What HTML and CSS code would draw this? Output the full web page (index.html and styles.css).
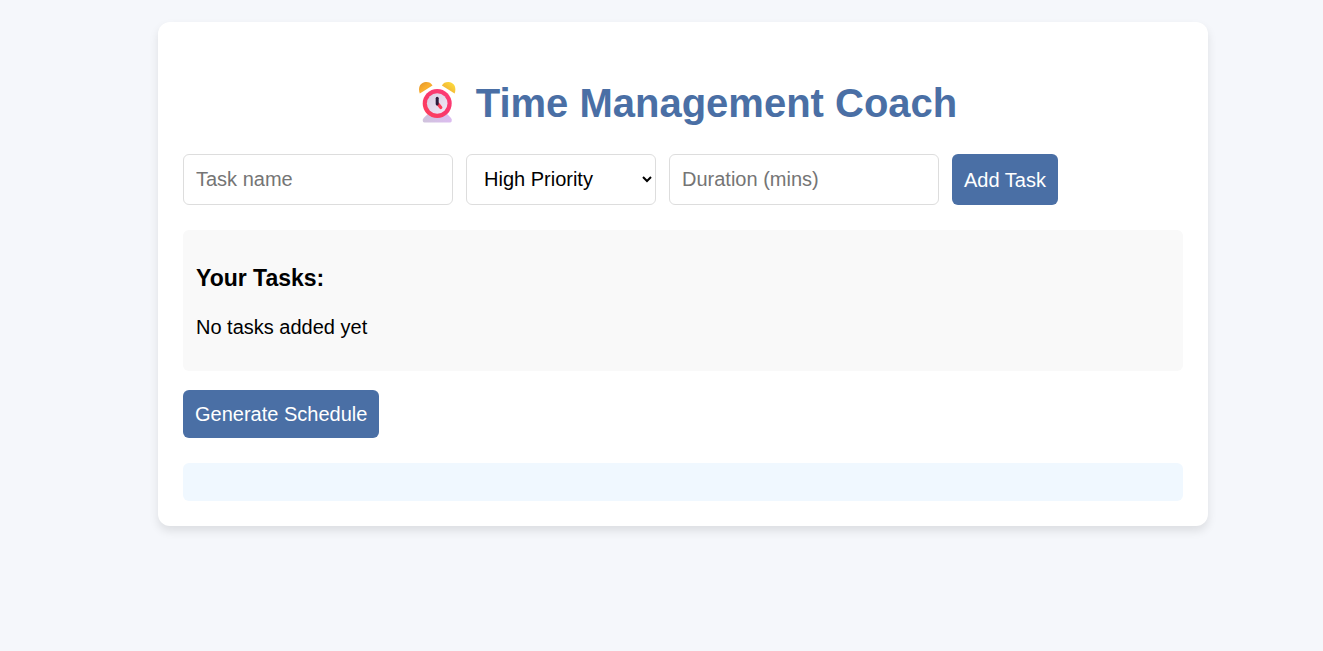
FILE: index.html
```html
<!DOCTYPE html>
<html lang="en">
<head>
<meta charset="utf-8">
<meta name="viewport" content="width=device-width, initial-scale=1">
<title>Time Management Coach</title>
<link rel="stylesheet" href="styles.css">
</head>
<body>
<main class="card">
  <h1 class="title">
    <svg class="clock" viewBox="0 0 55 44" aria-hidden="true">
      <defs>
        <linearGradient id="bell-left" x1="0" y1="0" x2="1" y2="1"><stop offset="0" stop-color="#e0942f"/><stop offset=".5" stop-color="#fbb02e"/><stop offset="1" stop-color="#dc9a3c"/></linearGradient>
        <linearGradient id="bell-right" x1="0" y1="1" x2="1" y2="0"><stop offset="0" stop-color="#ec9f33"/><stop offset="1" stop-color="#ffe43d"/></linearGradient>
        <linearGradient id="rim" x1="1" y1="0" x2="0" y2="1"><stop offset="0" stop-color="#ff3d78"/><stop offset=".5" stop-color="#f8386c"/><stop offset="1" stop-color="#ff4058"/></linearGradient>
        <linearGradient id="face" x1="0" y1="0" x2="1" y2="1"><stop offset="0" stop-color="#d9cbe0"/><stop offset="1" stop-color="#f2e8f6"/></linearGradient>
        <linearGradient id="foot" x1="0" y1="0" x2="1" y2="0"><stop offset="0" stop-color="#cfc3dc"/><stop offset="1" stop-color="#dcbcf0"/></linearGradient>
      </defs>
      <path d="M14 39.800q-1-2 .7-3.700l4.800-4.800h18l4.500 4.800q1.500 1.800.5 3.700-.4.600-1.500.600h-25.500q-1.100 0-1.500-.6z" fill="url(#foot)"/>
      <path d="M10.800 11.500C8.500 5.500 11.500 .5 16.700 .1c3-.2 5.500 1 6.800 3.400z" fill="url(#bell-left)"/>
      <path d="M45.600 11.500C47.900 5.500 44.900 .5 39.700 .1c-3-.2-5.500 1-6.800 3.400z" fill="url(#bell-right)"/>
      <circle cx="28.200" cy="21.500" r="14.500" fill="url(#rim)"/>
      <circle cx="28.200" cy="21.500" r="10.300" fill="url(#face)"/>
      <path d="M29 22l2.800 3.500" stroke="#ff3d57" stroke-width="3.200" stroke-linecap="round"/>
      <path d="M28.200 16.300v5.700" stroke="#2d1c3c" stroke-width="3" stroke-linecap="round"/>
    </svg>
    Time Management Coach
  </h1>
  <form class="task-form">
    <input class="field" type="text" placeholder="Task name" aria-label="Task name">
    <select class="field priority" aria-label="Priority">
      <option>High Priority</option>
      <option>Medium Priority</option>
      <option>Low Priority</option>
    </select>
    <input class="field" type="number" placeholder="Duration (mins)" aria-label="Duration (mins)">
    <button class="button" type="button">Add Task</button>
  </form>
  <section class="tasks">
    <h2 class="tasks-title">Your Tasks:</h2>
    <p class="tasks-empty">No tasks added yet</p>
  </section>
  <button class="button" type="button">Generate Schedule</button>
  <section class="schedule" aria-label="Schedule"></section>
</main>
</body>
</html>
```
FILE: styles.css
```css
* {
  box-sizing: border-box;
}

body {
  margin: 0;
  padding: 22px 0 24px 43px;
  background: #f5f7fb;
  color: #000;
  font: 20px/24px "Liberation Sans", Arial, sans-serif;
}

.card {
  max-width: 1050px;
  margin: 0 auto;
  padding: 25px;
  background: #fff;
  border-radius: 12px;
  box-shadow: 0 5px 10px rgba(0, 0, 0, 0.1);
}

.title {
  display: flex;
  flex-wrap: wrap;
  align-items: center;
  justify-content: center;
  gap: 12px;
  margin: 33px 0 27px;
  color: #4a6fa5;
  font-size: 40px;
  line-height: 47px;
}

.clock {
  width: 55px;
  height: 44px;
}

.task-form {
  display: flex;
  flex-wrap: wrap;
  gap: 13px;
  margin-bottom: 25px;
}

.field {
  width: 270px;
  height: 51px;
  padding: 12px;
  border: 1px solid #ddd;
  border-radius: 6px;
  background: #fff;
  color: #000;
  font: inherit;
}

.field::placeholder {
  color: #757575;
}

.priority {
  width: 190px;
  padding: 10px 12px 12px 13px;
}

.button {
  padding: 12px;
  border: 0;
  border-radius: 6px;
  background: #4a6fa5;
  color: #fff;
  font: inherit;
  cursor: pointer;
}

.tasks {
  margin-bottom: 19px;
  padding: 12px 13px;
  border-radius: 6px;
  background: #f9f9f9;
}

.tasks-title {
  margin: 24px 0 25px;
  font-size: 23px;
  line-height: 24px;
}

.tasks-empty {
  margin: 0 0 20px;
}

.schedule {
  min-height: 38px;
  margin-top: 25px;
  padding: 12px;
  border-radius: 6px;
  background: #f0f8ff;
}
```
